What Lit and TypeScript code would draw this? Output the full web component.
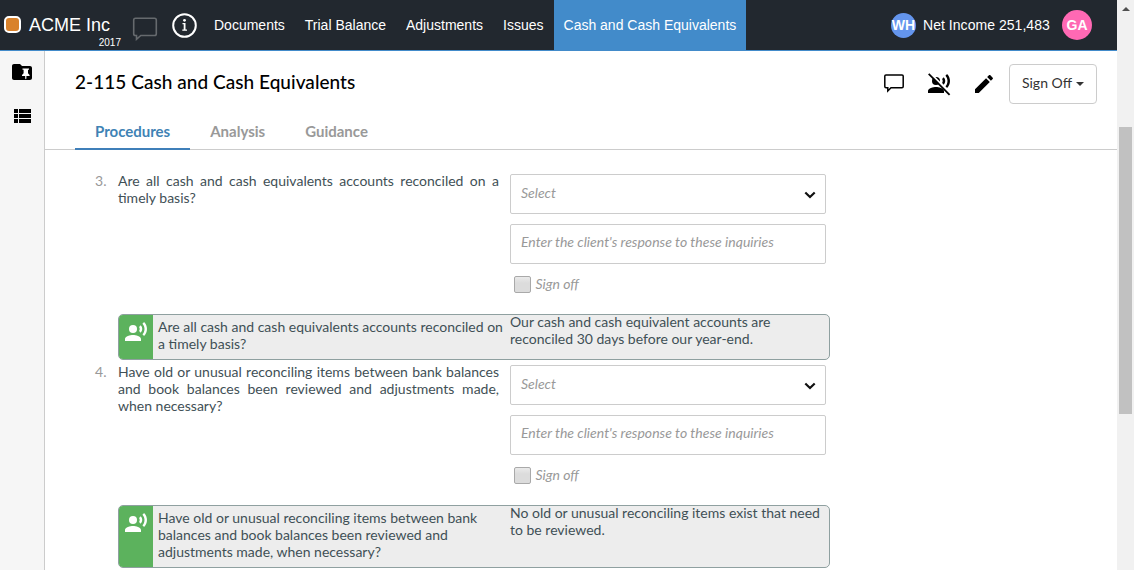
import { LitElement, html, css, svg } from "lit";
import { customElement, property } from "lit/decorators.js";

const voice = svg`<circle cx="9" cy="9" r="4"/><path d="M9 15c-2.67 0-8 1.34-8 4v2h16v-2c0-2.66-5.33-4-8-4zm7.76-9.64l-1.68 1.69c.84 1.18.84 2.71 0 3.89l1.68 1.69c2.02-2.02 2.02-5.07 0-7.27zM20.07 2l-1.63 1.63c2.77 3.02 2.77 7.56 0 10.74L20.07 16c3.9-3.89 3.91-9.95 0-14z"/>`;

@customElement("inquiry-item")
class InquiryItem extends LitElement {
  @property({ type: Number }) number = 0;
  @property() question = "";
  @property() response = "";

  static styles = css`
    :host { display: block; }
    .row { display: grid; grid-template-columns: 23px 381px 316px; column-gap: 0; height: 140px; }
    .num { color: #999; line-height: 17px; }
    .question { text-align: justify; line-height: 17px; }
    .fields { margin-left: 11px; width: 316px; padding-top: 2px; }
    .box {
      box-sizing: border-box; height: 40px; border: 1px solid #ccc; border-radius: 2px;
      padding: 0 10px; margin-bottom: 10px; background: #fff;
      display: flex; justify-content: space-between; align-items: center;
      color: #999; font-style: italic; line-height: 17px;
    }
    .box span { padding-bottom: 3px; }
    .box .hint { padding-bottom: 5px; letter-spacing: 0.01px; }
    .chevron { width: 12px; height: 8px; margin-top: 1px; margin-right: -1px; }
    .check { display: flex; align-items: center; color: #999; font-style: italic; height: 20px; padding-left: 4px; gap: 4.500px; }
    .check span { padding-bottom: 2px; }
    .tick {
      box-sizing: border-box; width: 17px; height: 17px; border: 1px solid #a9a9a9; border-radius: 2px;
      background: linear-gradient(#eaeaea, #dcdcdc 40%);
    }
    .answer {
      box-sizing: border-box; margin-left: 23px; width: 712px; display: grid;
      grid-template-columns: 34px 357px 1fr; border: 1px solid #8fa0a0; border-radius: 5px;
      background: #ededed; overflow: hidden; line-height: 17px; margin-top: 2px;
    }
    .flag { background: #5cb25d; padding: 5px 0 0 5px; }
    .flag svg { display: block; width: 24px; height: 24px; fill: #fff; }
    .asked { padding: 3px 5px 7px 5px; }
    .reply { white-space: pre-line; margin-top: -2px; }
  `;

  render() {
    return html`
      <div class="row">
        <div class="num">${this.number}.</div>
        <div class="question">${this.question}</div>
        <div class="fields">
          <div class="box"><span>Select</span>
            <svg class="chevron" viewBox="0 0 12 8"><path d="M1.3 1.5L6 6l4.700-4.500" fill="none" stroke="#111" stroke-width="2.200"/></svg>
          </div>
          <div class="box"><span class="hint">Enter the client's response to these inquiries</span></div>
          <div class="check"><div class="tick"></div><span>Sign off</span></div>
        </div>
      </div>
      <div class="answer">
        <div class="flag"><svg viewBox="0 0 24 24">${voice}</svg></div>
        <div class="asked">${this.question}</div>
        <div class="reply">${this.response}</div>
      </div>
    `;
  }
}

@customElement("app-root")
class AppRoot extends LitElement {
  static styles = css`
    :host {
      display: grid; grid-template-columns: 1117px 17px; width: 1134px; height: 570px; overflow: hidden;
      background: #fff; font: 14px Lato, sans-serif; color: #3f5056;
    }
    .app { display: flex; flex-direction: column; height: 570px; overflow: hidden; }
    .bar {
      flex: none; box-sizing: border-box; height: 51px; background: #22282f; border-bottom: 1px solid #428bca;
      display: flex; color: #fff; font-family: "Liberation Sans", sans-serif;
    }
    .brand { display: grid; grid-template-columns: 25px 96px; padding: 16px 0 0 4px; align-content: start; }
    .logo { box-sizing: border-box; width: 17px; height: 17px; border: 2px solid #fff; border-radius: 5px; background: #d9822b; }
    .name { font-size: 18px; line-height: 18px; }
    .year { grid-column: 2; font-size: 10px; line-height: 12px; text-align: right; padding-top: 3px; padding-right: 4px; }
    .bar .talk { width: 26px; height: 25px; margin: 16px 0 0 7px; }
    .bar .info { width: 26px; height: 26px; margin: 12px 0 0 13px; }
    .nav { display: flex; margin-left: 7px; line-height: 50px; }
    .nav div { padding: 0 10px; }
    .nav .on { background: #428bca; }
    .right { margin-left: auto; display: flex; align-items: center; padding-right: 25px; }
    .avatar { border-radius: 50%; font-weight: bold; display: flex; align-items: center; justify-content: center; }
    .wh { width: 25px; height: 25px; background: #6495ed; margin-right: 7px; }
    .ga { width: 30px; height: 30px; background: #ff69b4; margin-left: 12px; }
    .net { width: 127px; white-space: nowrap; letter-spacing: 0.04px; }
    .body { display: flex; flex: 1; min-height: 0; }
    .rail {
      flex: none; box-sizing: border-box; width: 45px; background: #f6f6f6; border-right: 1px solid #ccc;
      display: flex; flex-direction: column; padding: 9px 0 0 10px; gap: 20px;
    }
    .ico { width: 24px; height: 24px; display: block; }
    .page { flex: 1; display: flex; flex-direction: column; min-width: 0; }
    .head { display: flex; padding: 13px 20px 0 30px; align-items: center; height: 40px; }
    .title { font-size: 19px; font-weight: 500; color: #000; margin-right: auto; padding-bottom: 6px; letter-spacing: 0.04px; }
    .tools { display: flex; gap: 21px; margin-right: 13px; }
    .sign {
      box-sizing: border-box; width: 88px; height: 40px; border: 1px solid #ccc; border-radius: 4px;
      display: flex; align-items: center; justify-content: center; gap: 4px; color: #333; padding: 0 1px 3px 1px;
    }
    .caret { border: 4px solid transparent; border-top-color: #333; border-bottom: 0; margin-top: 3px; }
    .tabs { display: flex; height: 45px; border-bottom: 1px solid #ccc; padding-left: 30px; font-size: 15px; font-weight: bold; color: #999; }
    .tabs div { padding: 0 20px; line-height: 55px; height: 44px; }
    .tabs .on { color: #3f83b5; border-bottom: 2px solid #3f7fb9; }
    .list { padding: 22px 0 0 50px; display: flex; flex-direction: column; gap: 3px; }
    .scroll { background: #f1f1f1; display: flex; flex-direction: column; align-items: center; }
    .up { border: 4px solid transparent; border-bottom-color: #505050; border-top: 0; margin-top: 7px; }
    .thumb { width: 13px; height: 287px; background: #c1c1c1; margin-top: 116px; }
  `;

  render() {
    return html`
      <div class="app">
        <div class="bar">
          <div class="brand"><div class="logo"></div><div class="name">ACME Inc</div><div class="year">2017</div></div>
          <svg class="talk" viewBox="0 0 26 25"><path d="M3.500 2.300H22.500Q24.300 2.300 24.300 4.100V17.700Q24.300 19.500 22.500 19.500H8.800L4.500 23.300V19.500H3.500Q1.700 19.500 1.700 17.700V4.100Q1.700 2.300 3.500 2.300Z" fill="none" stroke="#666a6e" stroke-width="1.600"/></svg>
          <svg class="info" viewBox="0 0 26 26"><circle cx="13.500" cy="13.500" r="11.300" fill="none" stroke="#fff" stroke-width="2"/><path d="M11.500 11h3v6.500h1.500v1.200H11.300v-1.200h1.400v-5.300H11.500z" fill="#fff"/><circle cx="13.500" cy="8.300" r="1.400" fill="#fff"/></svg>
          <div class="nav"><div>Documents</div><div>Trial Balance</div><div>Adjustments</div><div>Issues</div><div class="on">Cash and Cash Equivalents</div></div>
          <div class="right"><div class="avatar wh">WH</div><div class="net">Net Income 251,483</div><div class="avatar ga">GA</div></div>
        </div>
        <div class="body">
          <div class="rail">
            <svg class="ico" viewBox="0 0 24 24"><path d="M10 4H4c-1.100 0-2 .9-2 2v12c0 1.100.9 2 2 2h16c1.100 0 2-.9 2-2V8c0-1.100-.9-2-2-2h-8z"/><path d="M12.500 8.500h6.500v1.200h-1v3.600l1.600 1.600v1.100h-3.200v2.500l-.6.800-.6-.8v-2.500H12v-1.100l1.600-1.600V9.700h-1.100z" fill="#fff"/></svg>
            <svg class="ico" viewBox="0 0 24 24"><path d="M4 14h4v-4H4v4zm0 5h4v-4H4v4zM4 9h4V5H4v4zm5 5h12v-4H9v4zm0 5h12v-4H9v4zM9 5v4h12V5H9z"/></svg>
          </div>
          <div class="page">
            <div class="head">
              <div class="title">2-115 Cash and Cash Equivalents</div>
              <div class="tools">
                <svg class="ico" viewBox="0 0 24 24"><path d="M4 2.900H20Q21.200 2.900 21.200 4.100V14.600Q21.200 15.800 20 15.800H9L5.800 19V15.800H4Q2.800 15.800 2.800 14.600V4.100Q2.800 2.900 4 2.900Z" fill="none" stroke="#000" stroke-width="1.500"/></svg>
                <svg class="ico" viewBox="0 0 24 24">${voice}<path d="M2.500 .5L24 22" stroke="#fff" stroke-width="2"/><path d="M1.700 1.900L22.600 22.800" stroke="#000" stroke-width="1.800"/></svg>
                <svg class="ico" viewBox="0 0 24 24"><path d="M3 17.250V21h3.750L17.810 9.940l-3.750-3.750L3 17.250zM20.710 7.040c.39-.39.39-1.020 0-1.410l-2.340-2.340c-.39-.39-1.020-.39-1.410 0l-1.830 1.830 3.750 3.750 1.830-1.830z"/></svg>
              </div>
              <div class="sign">Sign Off<div class="caret"></div></div>
            </div>
            <div class="tabs"><div class="on">Procedures</div><div>Analysis</div><div>Guidance</div></div>
            <div class="list">
              <inquiry-item .number=${3} .question=${"Are all cash and cash equivalents accounts reconciled on a timely basis?"} .response=${"Our cash and cash equivalent accounts are\nreconciled 30 days before our year-end."}></inquiry-item>
              <inquiry-item .number=${4} .question=${"Have old or unusual reconciling items between bank balances and book balances been reviewed and adjustments made, when necessary?"} .response=${"No old or unusual reconciling items exist that need\nto be reviewed."}></inquiry-item>
            </div>
          </div>
        </div>
      </div>
      <div class="scroll"><div class="up"></div><div class="thumb"></div></div>
    `;
  }
}
